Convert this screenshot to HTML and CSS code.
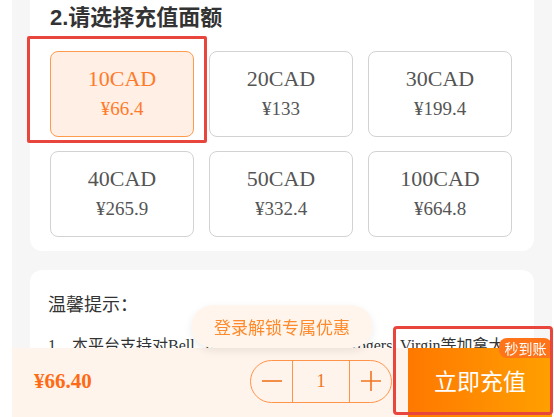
FILE: index.html
```html
<!DOCTYPE html>
<html lang="zh">
<head>
    <meta charset="UTF-8">
    <title>话费充值</title>
    <link rel="stylesheet" href="styles.css">
</head>
<body>
    <div class="phone">
        <div class="card amount">
            <h2 class="title">2.请选择充值面额</h2>
            <div class="options">
                <div class="option active"><div class="cad">10CAD</div><div class="cny">¥66.4</div></div>
                <div class="option"><div class="cad">20CAD</div><div class="cny">¥133</div></div>
                <div class="option"><div class="cad">30CAD</div><div class="cny">¥199.4</div></div>
                <div class="option"><div class="cad">40CAD</div><div class="cny">¥265.9</div></div>
                <div class="option"><div class="cad">50CAD</div><div class="cny">¥332.4</div></div>
                <div class="option"><div class="cad">100CAD</div><div class="cny">¥664.8</div></div>
            </div>
        </div>

        <div class="card tips">
            <div class="tips-title">温馨提示：</div>
            <p class="tip">1、本平台支持对Bell, Telus, Fido, Freedom, Rogers, Virgin等加拿大运营商的手机号码进行话费充值</p>
            <p class="tip">2、充值成功后一般秒到账，高峰期可能略有延迟</p>
        </div>
    </div>

    <div class="paybar">
        <div class="login-tip">登录解锁专属优惠</div>
        <div class="total">¥66.40</div>
        <div class="stepper">
            <span class="step">
                <svg width="22" height="22" viewBox="0 0 22 22"><path d="M1 11h20" stroke="#f07420" stroke-width="1.6"/></svg>
            </span>
            <span class="count">1</span>
            <span class="step">
                <svg width="22" height="22" viewBox="0 0 22 22"><path d="M1 11h20M11 1v20" stroke="#f07420" stroke-width="1.6"/></svg>
            </span>
        </div>
        <button class="pay-btn">立即充值<span class="badge">秒到账</span></button>
    </div>

    <!-- annotation boxes -->
    <div class="mark mark-option"></div>
    <div class="mark mark-pay"></div>
</body>
</html>
```

FILE: styles.css
```css
body, html {
    margin: 0;
    height: 100%;
    background: #fff;
    overflow: hidden;
    font-family: "Liberation Serif", "Noto Sans CJK SC", serif;
}
.phone {
    margin-left: 12px;
    width: 540px;
    min-height: 100%;
    box-sizing: border-box;
    padding: 0 18px;
    background: #f6f6f6;
}
.card {
    background: #fff;
    border-radius: 12px;
}
.amount {
    border-radius: 0 0 12px 12px;
    padding: 4px 23px 14px 20px;
}
.title {
    margin: 0;
    font-family: "Liberation Sans", "Noto Sans CJK SC", sans-serif;
    font-size: 22px;
    line-height: 28px;
    font-weight: bold;
    color: #333;
}
.options {
    margin-top: 19px;
    display: grid;
    grid-template-columns: repeat(3, 144px);
    grid-auto-rows: 86px;
    column-gap: 15px;
    row-gap: 14px;
}
.option {
    border: 1px solid #d2d2d2;
    border-radius: 8px;
    display: flex;
    flex-direction: column;
    justify-content: center;
    align-items: center;
    color: #555;
    line-height: 30px;
}
.option .cad {
    font-size: 22px;
}
.option .cny {
    font-size: 19px;
}
.option.active {
    border-color: #ff9b4f;
    background: #ffefe4;
    color: #ff7a2a;
}
.tips {
    margin-top: 19px;
    padding: 23px 20px 40px 18px;
    height: 300px;
}
.tips-title {
    font-size: 18px;
    line-height: 24px;
    color: #333;
}
.tip {
    margin: 17px 0 0;
    font-size: 16px;
    line-height: 24px;
    color: #333;
}
.paybar {
    position: fixed;
    left: 12px;
    bottom: 0;
    width: 540px;
    height: 69px;
    background: #fff4eb;
    display: flex;
    align-items: center;
}
.login-tip {
    position: absolute;
    bottom: 100%;
    left: 50%;
    transform: translateX(-50%);
    width: 181px;
    height: 43px;
    border-radius: 22px;
    background: #fff5ec;
    box-shadow: 0 3px 8px rgba(0, 0, 0, 0.08);
    color: #ff8a2c;
    font-family: "Noto Sans CJK SC", sans-serif;
    font-size: 17px;
    line-height: 43px;
    text-align: center;
}
.total {
    margin-left: 22px;
    flex: 1;
    color: #ff6a16;
    font-size: 21px;
    font-weight: bold;
    padding-bottom: 3px;
}
.stepper {
    margin-right: 16px;
    margin-bottom: 3px;
    height: 41px;
    border: 1.5px solid #ff934a;
    border-radius: 22px;
    display: flex;
}
.step {
    width: 41px;
    display: flex;
    justify-content: center;
    align-items: center;
}
.count {
    width: 56px;
    border-left: 1.5px solid #ff934a;
    border-right: 1.5px solid #ff934a;
    color: #f07420;
    font-size: 18px;
    line-height: 41px;
    text-align: center;
}
.pay-btn {
    position: relative;
    width: 144px;
    height: 69px;
    border: none;
    padding: 0 0 5px;
    background: linear-gradient(90deg, #ff7800, #ffa000);
    color: #fff;
    font-family: "Noto Sans CJK SC", sans-serif;
    font-size: 23px;
}
.badge {
    position: absolute;
    top: -10px;
    right: 0;
    width: 53px;
    height: 20px;
    border-radius: 8px 8px 0 8px;
    background: #ff7418;
    color: #fff;
    font-size: 14px;
    line-height: 20px;
    text-align: center;
}
.mark {
    position: fixed;
    box-sizing: border-box;
    border: 3px solid #e8463d;
    z-index: 10;
}
.mark-option {
    left: 27px;
    top: 36px;
    width: 180px;
    height: 107px;
    border-radius: 2px;
}
.mark-pay {
    left: 393px;
    top: 326px;
    width: 160px;
    height: 89px;
    border-radius: 4px;
}
```
